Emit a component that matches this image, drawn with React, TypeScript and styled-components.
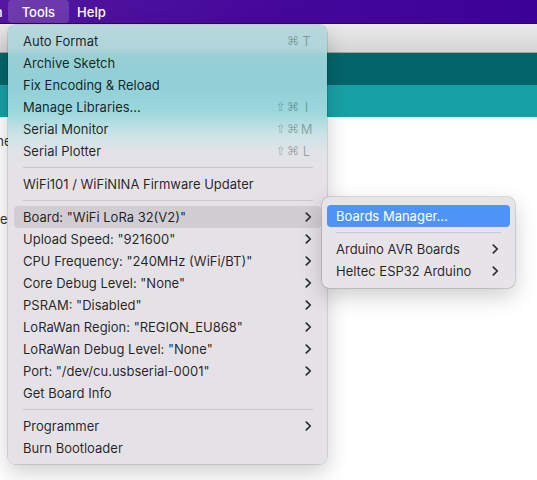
import React from 'react';
import styled, { createGlobalStyle } from 'styled-components';

const GlobalStyle = createGlobalStyle`
html, body {
	margin: 0;
	padding: 0;
	background: #ffffff;
}
body {
	font-family: Inter, "DejaVu Sans", sans-serif;
	-webkit-font-smoothing: antialiased;
}
`;

type Entry =
	| { kind: 'item'; label: string; submenu?: boolean; shortcut?: [string, string]; active?: boolean }
	| { kind: 'sep' };

const toolsEntries: Entry[] = [
	{ kind: 'item', label: 'Auto Format', shortcut: ['⌘', 'T'] },
	{ kind: 'item', label: 'Archive Sketch' },
	{ kind: 'item', label: 'Fix Encoding & Reload' },
	{ kind: 'item', label: 'Manage Libraries...', shortcut: ['⇧⌘', 'I'] },
	{ kind: 'item', label: 'Serial Monitor', shortcut: ['⇧⌘', 'M'] },
	{ kind: 'item', label: 'Serial Plotter', shortcut: ['⇧⌘', 'L'] },
	{ kind: 'sep' },
	{ kind: 'item', label: 'WiFi101 / WiFiNINA Firmware Updater' },
	{ kind: 'sep' },
	{ kind: 'item', label: 'Board: "WiFi LoRa 32(V2)"', submenu: true, active: true },
	{ kind: 'item', label: 'Upload Speed: "921600"', submenu: true },
	{ kind: 'item', label: 'CPU Frequency: "240MHz (WiFi/BT)"', submenu: true },
	{ kind: 'item', label: 'Core Debug Level: "None"', submenu: true },
	{ kind: 'item', label: 'PSRAM: "Disabled"', submenu: true },
	{ kind: 'item', label: 'LoRaWan Region: "REGION_EU868"', submenu: true },
	{ kind: 'item', label: 'LoRaWan Debug Level: "None"', submenu: true },
	{ kind: 'item', label: 'Port: "/dev/cu.usbserial-0001"', submenu: true },
	{ kind: 'item', label: 'Get Board Info' },
	{ kind: 'sep' },
	{ kind: 'item', label: 'Programmer', submenu: true },
	{ kind: 'item', label: 'Burn Bootloader' },
];

const boardEntries: Entry[] = [
	{ kind: 'item', label: 'Boards Manager...', active: true },
	{ kind: 'sep' },
	{ kind: 'item', label: 'Arduino AVR Boards', submenu: true },
	{ kind: 'item', label: 'Heltec ESP32 Arduino', submenu: true },
];

const Chevron = () => (
	<svg width="7" height="10" viewBox="0 0 7 10">
		<path d="M1.3 1.2 L5.3 5 L1.3 8.8" fill="none" stroke="#2b2b2b" strokeWidth="1.7" strokeLinecap="round" strokeLinejoin="round" />
	</svg>
);

const MenuList = ({ entries, variant }: { entries: Entry[]; variant: 'main' | 'sub' }) => (
	<>
		{entries.map((e, i) =>
			e.kind === 'sep' ? (
				<Separator key={i} $variant={variant} />
			) : (
				<Row key={i} $variant={variant} $active={e.active}>
					<span>{e.label}</span>
					{e.shortcut && (
						<Shortcut>
							<Mods>{e.shortcut[0]}</Mods>
							<Key>{e.shortcut[1]}</Key>
						</Shortcut>
					)}
					{e.submenu && <Chevron />}
				</Row>
			)
		)}
	</>
);

const App = () => {
	return (
		<Screen>
			<GlobalStyle />
			<MenuBar>
				<MenuTitle className='cut'>Sketch</MenuTitle>
				<MenuTitle $open>Tools</MenuTitle>
				<MenuTitle>Help</MenuTitle>
			</MenuBar>
			<Window>
				<Toolbar />
				<TealBar $tone='dark' />
				<TealBar $tone='light' />
				<Editor>
					<EditorLine>the</EditorLine>
					<EditorLine $gap={62}>be</EditorLine>
				</Editor>
			</Window>
			<ToolsMenu>
				<MenuList entries={toolsEntries} variant='main' />
			</ToolsMenu>
			<BoardMenu>
				<MenuList entries={boardEntries} variant='sub' />
			</BoardMenu>
		</Screen>
	);
};

const Screen = styled.div`
position: relative;
width: 537px;
height: 480px;
overflow: hidden;
display: flex;
flex-direction: column;
background: #ffffff;
`;

const MenuBar = styled.div`
height: 24px;
flex-shrink: 0;
display: flex;
align-items: stretch;
background: linear-gradient(90deg, #52169f 0%, #45089b 50%, #3c0197 100%);
border-bottom: 1px solid #2c006e;
box-sizing: border-box;

.cut {
	margin-left: -48px;
	padding-right: 5px;
}
`;

const MenuTitle = styled.div<{ $open?: boolean }>`
display: flex;
align-items: center;
padding: 0 ${p => (p.$open ? '14px' : '8px')};
height: 23px;
border-radius: 4px;
color: #ffffff;
font-size: 13px;
font-weight: 500;
background: ${p => (p.$open ? 'rgba(255,255,255,0.16)' : 'transparent')};
`;

const Window = styled.div`
flex: 1;
display: flex;
flex-direction: column;
`;

const Toolbar = styled.div`
height: 28px;
background: linear-gradient(180deg, #ebebeb 0%, #d5d5d5 100%);
border-bottom: 1px solid #a3a3a3;
`;

const TealBar = styled.div<{ $tone: 'dark' | 'light' }>`
height: 32px;
background: ${p => (p.$tone === 'dark' ? '#03656a' : '#18a1a5')};
`;

const Editor = styled.div`
flex: 1;
background: #ffffff;
padding-top: 16px;
display: flex;
flex-direction: column;
`;

const EditorLine = styled.div<{ $gap?: number }>`
margin-left: -8px;
margin-top: ${p => p.$gap ?? 0}px;
font-size: 13px;
line-height: 16px;
color: #333333;
`;

const ToolsMenu = styled.div`
position: absolute;
left: 8px;
top: 25px;
width: 319px;
padding: 5px 0;
box-sizing: border-box;
border-radius: 7px;
background: linear-gradient(180deg,
	#b8d8dc 0px,
	#afd5da 24px,
	#98cfd5 31px,
	#90d0d6 60px,
	#9bd7dc 86px,
	#b2dee2 98px,
	#cde3e6 110px,
	#dfe3e7 125px,
	#e4e2e7 145px,
	#e4e2e7 100%);
box-shadow: 0 0 0 0.5px rgba(0, 0, 0, 0.22), 0 8px 22px rgba(0, 0, 0, 0.2);
`;

const BoardMenu = styled.div`
position: absolute;
left: 322px;
top: 197px;
width: 193px;
padding: 8px 0 6px;
box-sizing: border-box;
border-radius: 7px;
background: #e6e4e9;
box-shadow: 0 0 0 0.5px rgba(0, 0, 0, 0.25), 0 8px 22px rgba(0, 0, 0, 0.2);
`;

const Row = styled.div<{ $variant: 'main' | 'sub'; $active?: boolean }>`
display: flex;
align-items: center;
justify-content: space-between;
height: 22px;
margin: 0 ${p => (p.$variant === 'main' ? '6px' : '5px')};
padding: 0 ${p => (p.$variant === 'main' ? '9px' : '11px')} 0 9px;
border-radius: 4px;
font-size: 13px;
color: ${p => (p.$active && p.$variant === 'sub' ? '#ffffff' : 'rgba(0, 0, 0, 0.85)')};
background: ${p => (!p.$active ? 'transparent' : p.$variant === 'sub' ? '#4d94f6' : 'rgba(0, 0, 0, 0.085)')};
white-space: nowrap;

svg {
	flex-shrink: 0;
}
`;

const Separator = styled.div<{ $variant: 'main' | 'sub' }>`
height: 1px;
margin: 5px ${p => (p.$variant === 'main' ? '14px 5px 15px' : '14px 5px 14px')};
background: rgba(0, 0, 0, 0.12);
`;

const Shortcut = styled.div`
display: flex;
align-items: center;
color: rgba(0, 0, 0, 0.3);
font-size: 13px;
margin-right: -1px;
`;

const Mods = styled.span`
font-family: "DejaVu Sans", sans-serif;
font-size: 12px;
letter-spacing: 1px;
`;

const Key = styled.span`
width: 13px;
text-align: center;
`;

export default App;
